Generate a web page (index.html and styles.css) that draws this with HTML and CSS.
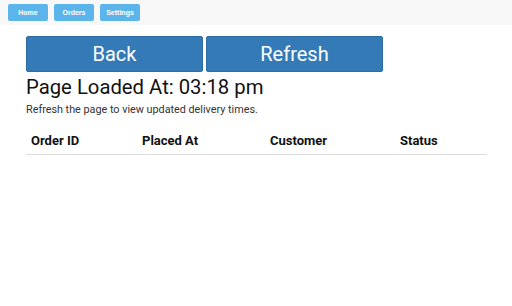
FILE: index.html
```html
<!DOCTYPE html>
<html lang="en">
<head>
    <meta charset="UTF-8">
    <meta name="viewport" content="width=device-width, initial-scale=1.0">
    <title>Orders</title>
    <link rel="stylesheet" href="styles.css">
</head>
<body>
    <div class="topnav">
        <a class="nav-btn" href="#">Home</a>
        <a class="nav-btn" href="#">Orders</a>
        <a class="nav-btn" href="#">Settings</a>
    </div>

    <div class="container">
        <div class="actions">
            <button type="button" class="big-btn">Back</button>
            <button type="button" class="big-btn">Refresh</button>
        </div>

        <h1>Page Loaded At: 03:18 pm</h1>
        <p class="note">Refresh the page to view updated delivery times.</p>

        <table class="orders">
            <thead>
                <tr>
                    <th class="col-id">Order ID</th>
                    <th class="col-placed">Placed At</th>
                    <th class="col-customer">Customer</th>
                    <th class="col-status">Status</th>
                </tr>
            </thead>
            <tbody></tbody>
        </table>
    </div>
</body>
</html>
```

FILE: styles.css
```css
body {
    margin: 0;
    font-family: 'Roboto', sans-serif;
    background-color: #fff;
    color: #111;
}

.topnav {
    background-color: #f8f8f8;
    height: 25px;
    padding: 4px 8px 0;
    box-sizing: border-box;
    display: flex;
    gap: 6px;
}

.nav-btn {
    width: 40px;
    height: 17px;
    background-color: #5bb4ea;
    border-radius: 2px;
    color: white;
    font-family: 'Liberation Sans', Arial, sans-serif;
    font-weight: bold;
    font-size: 7px;
    text-decoration: none;
    display: flex;
    align-items: center;
    justify-content: center;
}

.container {
    padding: 11px 26px 0;
}

.actions {
    display: flex;
    gap: 3px;
}

.big-btn {
    width: 177px;
    height: 36px;
    background-color: #337ab7;
    border: 1px solid #2e6da4;
    border-radius: 2px;
    color: white;
    font-family: 'Roboto', sans-serif;
    font-size: 20px;
    padding: 0;
    cursor: pointer;
}

h1 {
    font-size: 20.3px;
    font-weight: normal;
    margin: 3px 0 0;
    line-height: 24px;
}

.note {
    font-size: 10.8px;
    color: #333;
    margin: 4px 0 0;
    line-height: 14px;
}

.orders {
    margin-top: 11px;
    width: 461px;
    border-collapse: collapse;
}

.orders th {
    text-align: left;
    font-size: 13px;
    font-weight: bold;
    padding: 5px 5px 6px;
    border-bottom: 1px solid #ddd;
}

.col-id { width: 101px; }
.col-placed { width: 118px; }
.col-customer { width: 120px; }
```
